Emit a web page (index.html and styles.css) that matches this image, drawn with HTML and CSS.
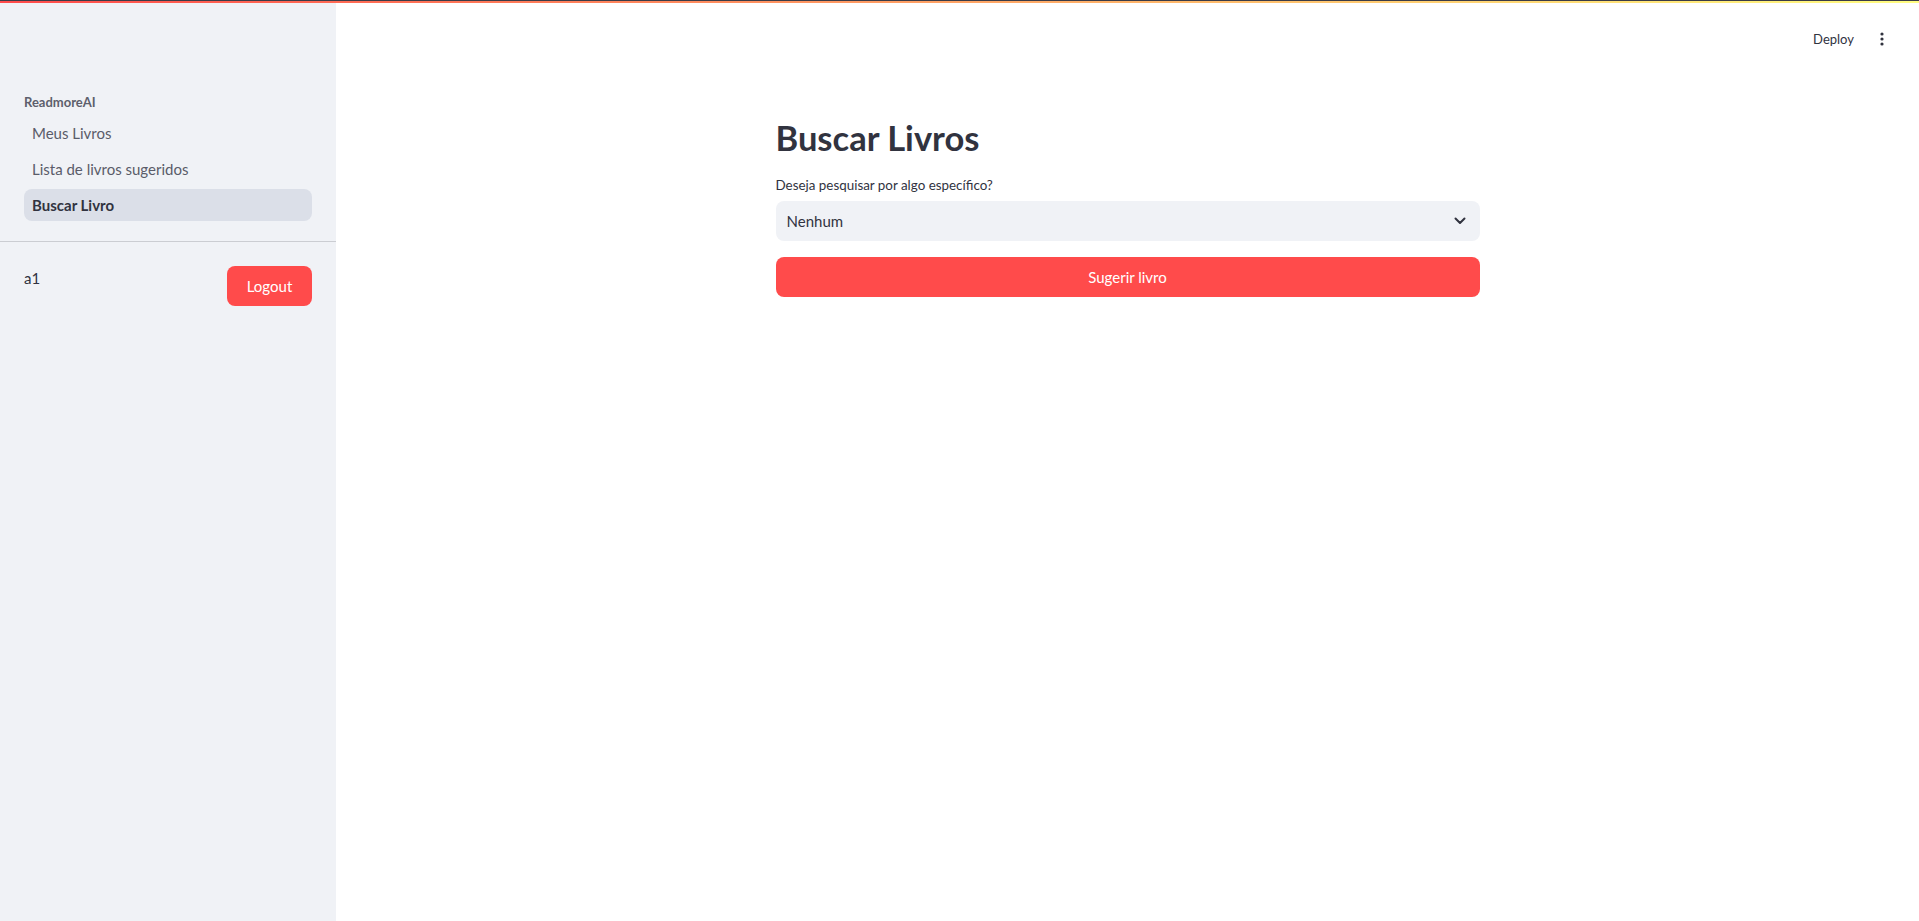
FILE: index.html
```html
<!DOCTYPE html>
<html lang="pt">
<head>
<meta charset="utf-8">
<title>ReadmoreAI - Buscar Livro</title>
<link rel="stylesheet" href="styles.css">
</head>
<body>
<div class="app">
  <div class="deco"></div>
  <div class="row">
    <aside class="sidebar">
      <div class="brand">ReadmoreAI</div>
      <nav class="nav">
        <a class="nav-item">Meus Livros</a>
        <a class="nav-item">Lista de livros sugeridos</a>
        <a class="nav-item active">Buscar Livro</a>
      </nav>
      <div class="divider"></div>
      <div class="user-row">
        <span class="user">a1</span>
        <button class="btn logout">Logout</button>
      </div>
    </aside>
    <main class="main">
      <header class="toolbar">
        <span class="deploy">Deploy</span>
        <span class="kebab" aria-label="menu">
          <svg width="4" height="14" viewBox="0 0 4 14"><circle cx="2" cy="2" r="1.6" fill="#31333f"/><circle cx="2" cy="7" r="1.6" fill="#31333f"/><circle cx="2" cy="12" r="1.6" fill="#31333f"/></svg>
        </span>
      </header>
      <section class="content">
        <h1 class="title">Buscar Livros</h1>
        <label class="label">Deseja pesquisar por algo específico?</label>
        <div class="select">
          <span class="select-value">Nenhum</span>
          <svg class="chev" width="12" height="8" viewBox="0 0 12 8"><path d="M1.5 1.5 L6 6 L10.5 1.5" fill="none" stroke="#31333f" stroke-width="2" stroke-linecap="round" stroke-linejoin="round"/></svg>
        </div>
        <button class="btn wide">Sugerir livro</button>
      </section>
    </main>
  </div>
</div>
</body>
</html>
```
FILE: styles.css
```css
* { box-sizing: border-box; }
html, body { margin: 0; padding: 0; }
body {
  font-family: Lato, "Noto Sans", sans-serif;
  color: #31333f;
  background: #fff;
}
.app {
  height: 100vh;
  display: flex;
  flex-direction: column;
}
.deco {
  height: 3px;
  border-top: 1px solid #3b3c47;
  background: linear-gradient(90deg, #ff4b4b, #fffd80);
  flex: none;
}
.row {
  flex: 1;
  display: flex;
  min-height: 0;
}
.sidebar {
  width: 336px;
  flex: none;
  background: #f0f2f6;
  padding-top: 89px;
}
.brand {
  margin: 0 24px;
  font-size: 13px;
  font-weight: 700;
  line-height: 20px;
  color: #5d5f6c;
}
.nav {
  margin: 5px 24px 0;
  display: flex;
  flex-direction: column;
  gap: 4px;
}
.nav-item {
  height: 32px;
  line-height: 32px;
  padding-left: 8px;
  border-radius: 8px;
  font-size: 15px;
  color: #5a5c69;
}
.nav-item.active {
  background: #dbdfe8;
  color: #31333f;
  font-weight: 700;
}
.divider {
  height: 1px;
  background: #cbcdd2;
  margin-top: 20px;
}
.user-row {
  display: flex;
  justify-content: space-between;
  align-items: flex-start;
  padding: 24px 24px 0;
}
.user {
  font-size: 15px;
  line-height: 24px;
}
.btn {
  border: none;
  background: #ff4b4b;
  color: #fff;
  font-family: inherit;
  font-size: 15px;
  border-radius: 8px;
  height: 40px;
  cursor: pointer;
}
.logout {
  width: 85px;
}
.main {
  flex: 1;
  display: flex;
  flex-direction: column;
}
.toolbar {
  height: 57px;
  display: flex;
  justify-content: flex-end;
  align-items: center;
  padding: 15px 35px 0 0;
  gap: 26px;
}
.deploy {
  font-size: 13px;
  line-height: 20px;
}
.kebab {
  display: flex;
  align-items: center;
}
.content {
  width: 704px;
  margin: 0 auto;
  display: flex;
  flex-direction: column;
}
.title {
  margin: 56px 0 0;
  font-size: 34.5px;
  line-height: 43px;
  font-weight: 700;
  color: #31333f;
}
.label {
  margin-top: 16px;
  font-size: 13.4px;
  line-height: 20px;
}
.select {
  margin-top: 6px;
  height: 40px;
  background: #f0f2f6;
  border-radius: 8px;
  display: flex;
  align-items: center;
  justify-content: space-between;
  padding: 0 14px 0 11px;
}
.select-value {
  font-size: 15px;
}
.wide {
  margin-top: 16px;
  width: 100%;
}
```
